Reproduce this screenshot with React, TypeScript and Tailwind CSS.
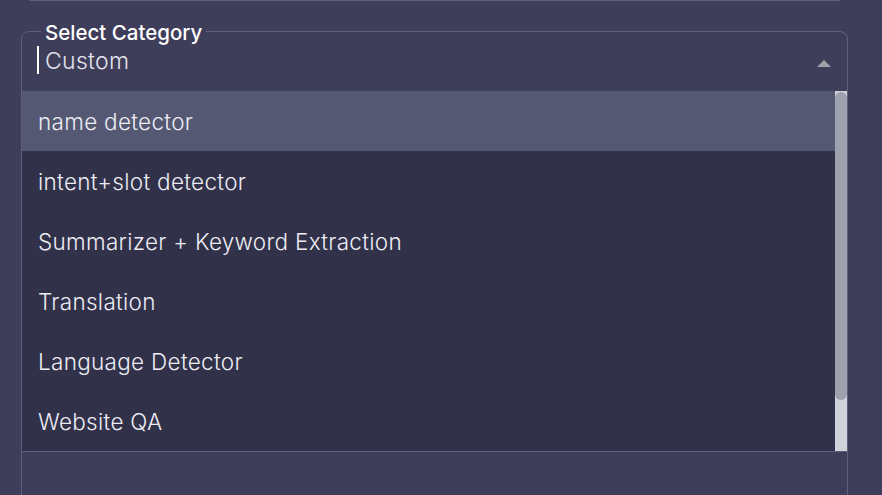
import React from "react";

const options = [
  "name detector",
  "intent+slot detector",
  "Summarizer + Keyword Extraction",
  "Translation",
  "Language Detector",
  "Website QA",
];

export default function App() {
  return (
    <div
      className="relative h-[495px] w-[882px] overflow-hidden bg-[#3f3e5a] text-[#ececf2]"
      style={{ fontFamily: "Inter, 'Noto Sans', sans-serif" }}
    >
      <div className="ml-[29px] h-px w-[811px] bg-[#5e5e7c]" />

      <fieldset className="ml-[21px] mt-[18px] h-[520px] w-[827px] rounded-lg border border-[#5f5f7d] px-[15px]">
        <legend className="ml-[4px] px-[4px] text-[20.5px] font-medium leading-[24px] text-white">
          <span className="relative top-[2px]">Select Category</span>
        </legend>
        <div className="flex items-center">
          <span className="mt-[2px] h-[28px] w-[2px] bg-white" />
          <span className="ml-[6px] mt-[4px] text-[23px] font-light leading-[28px] tracking-[0.3px] text-[#e4e4ec]">
            Custom
          </span>
          <div className="ml-auto mr-[1px] mt-[9px] h-0 w-0 border-x-[7px] border-b-[7px] border-x-transparent border-b-[#a3a3ab]" />
        </div>
      </fieldset>

      <div className="absolute left-[22px] top-[91px] flex w-[825px] border-b border-[#5f5f7d] bg-[#31314a]">
        <ul className="flex-1">
          {options.map((o, i) => (
            <li
              key={o}
              className={`flex h-[60px] items-center pl-[16px] pt-[2px] text-[22.5px] font-light tracking-[0.3px] text-[#ececf2] ${
                i === 0 ? "bg-[#555873]" : ""
              }`}
            >
              {o}
            </li>
          ))}
        </ul>
        <div className="w-[12px] bg-[#d1d3db] pt-px">
          <div className="h-[308px] rounded-full bg-[#9ea2ae]" />
        </div>
      </div>
    </div>
  );
}
